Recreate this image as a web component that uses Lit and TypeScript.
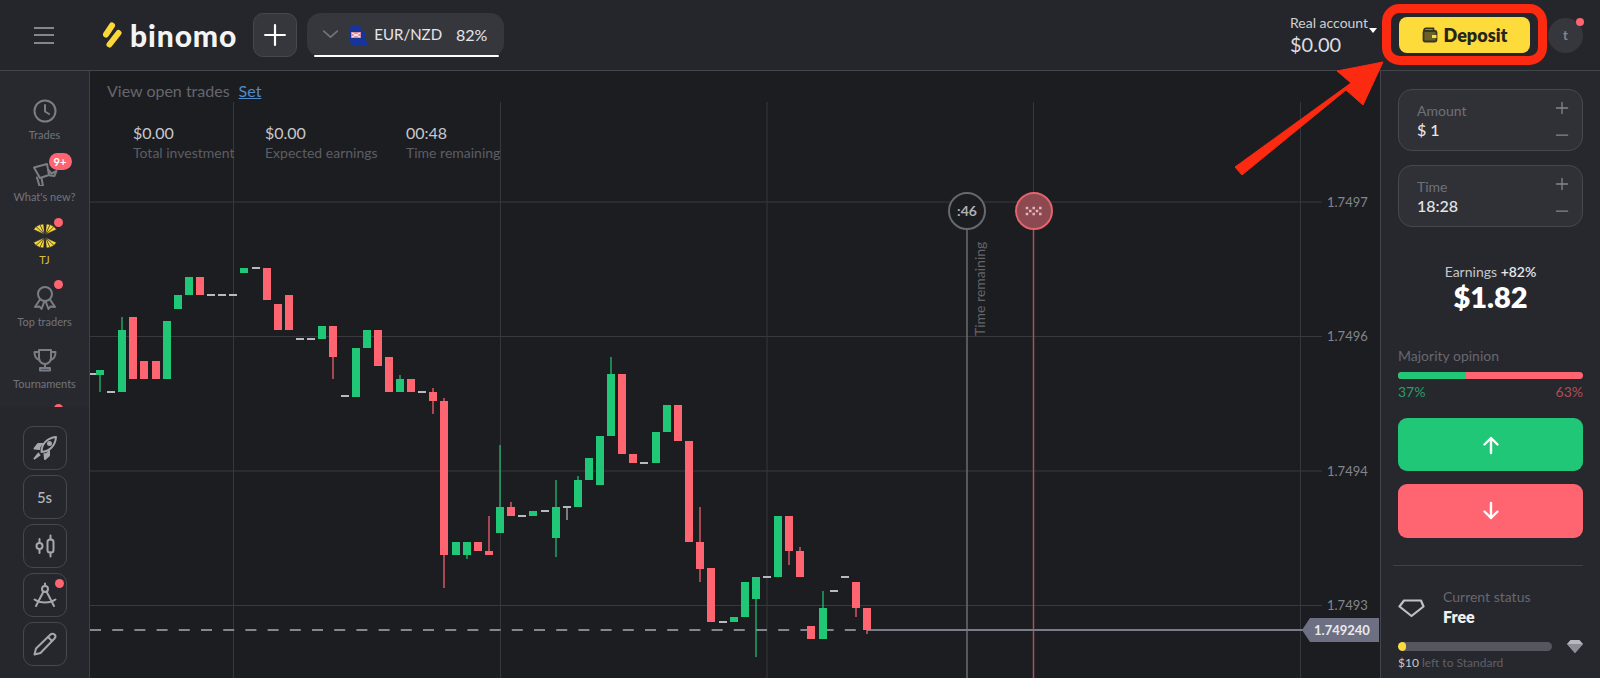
import { LitElement, html, css, svg } from "lit";
import { customElement } from "lit/decorators.js";

// [kind, left x, body top, body bottom, wick top, wick bottom]; g = green, r = red, d = doji dash
type C = [string, number, number, number, number?, number?];
const CANDLES: C[] = [
  ["d",90,374,374],["g",96,370,375,370,392],["d",107,392,392],["g",118,330,392,317,392],["r",129,317,379],["r",140,361,379],["r",152,361,379],["g",163,321,379],
  ["g",174,295,309],["g",185,277,295],["r",196,277,295],["d",207,295,295],["d",218,295,295],["d",229,295,295],["g",240,268,273],["d",252,268,268],
  ["r",263,268,300],["r",274,304,330],["r",285,295,330],["d",296,339,339],["d",307,339,339],["g",318,326,339],["r",329,326,357,326,379],["d",341,396,396],
  ["g",352,348,397],["g",363,330,348],["r",374,330,366],["r",385,357,392],["g",396,379,392,375,392],["r",407,379,392],["d",418,392,392],["r",429,392,401,388,414],
  ["r",440,401,555,398,588],["g",452,542,555],["g",463,542,555,542,559],["r",474,542,551],["r",485,551,555,516,555],["g",496,507,533,445,533],["r",507,507,516,502,516],
  ["d",518,516,516],["g",529,511,516],["d",541,511,511],["g",552,507,538,480,557],["d",563,507,507,507,520],["g",574,480,507,476,507],["g",585,458,480],["g",596,436,485],
  ["g",607,374,436,357,436],["r",618,374,454],["r",629,454,463],["d",640,463,463],["g",652,432,463],["g",663,405,432],["r",674,405,441],["r",685,441,542],
  ["r",696,542,569,507,582],["r",707,568,622],["d",719,622,622],["g",730,617,622],["g",741,582,617],["g",752,577,599,577,657],["d",763,577,577],["g",774,516,577],
  ["r",785,516,551,516,565],["r",796,551,577,547,577],["r",807,626,639],["g",819,608,639,591,639],["d",830,591,591],["d",841,577,577],["r",852,582,608,582,617],["r",863,608,630,608,634],
];
const COL: Record<string, string> = { g: "#1fc777", r: "#ff6571", d: "#b9bac0" };
const GRID_Y = [202, 336.5, 471, 605.5];
const GRID_X = [233.5, 500.5, 767, 1033.5, 1300.5];
const AXIS: [string, number][] = [["1.7497", 202], ["1.7496", 336.5], ["1.7494", 471], ["1.7493", 605.5]];
const DOTS: [number, number][] = [[1027,208],[1033.7,208],[1040.3,208],[1030.3,211],[1037,211],[1027,214],[1033.7,214],[1040.3,214]];

function candle(c: C) {
  const [k, x, t, b, wt, wb] = c;
  const col = COL[k];
  const wick = wt !== undefined
    ? svg`<rect x=${x + 3.4} y=${wt} width="1.2" height=${(wb as number) - wt} fill=${col}></rect>` : null;
  const h = k === "d" ? 2 : b - t;
  return svg`${wick}<rect x=${x} y=${k === "d" ? t - 1 : t} width="8" height=${h} fill=${col}></rect>`;
}

const ic = (body: unknown, s = 26) => html`<svg class="ic" width=${s} height=${s} viewBox="0 0 26 26" fill="none" stroke="#7c7d84" stroke-width="2" stroke-linejoin="round" stroke-linecap="round">${body}</svg>`;

const clock = ic(svg`<circle cx="13" cy="13" r="10.5"></circle><path d="M13 7v6.5l4 2.5"></path>`);
const mega = ic(svg`<g transform="translate(0 2)"><path d="M2 5.500 15 2l2 11-9 3Z"></path><path d="M5 15.500 7.500 24h3.500l-1.500-8"></path><path d="M16.500 8l3 3.500 5-2.500-2 5-4.500-.5"></path></g>`);
const tj = ic(svg`<g stroke="#28292f" stroke-width=".6" fill="#f6d63b"><path d="M12.500 11.500 1.500 6.500 4 3.500Z"></path><path d="M12.500 11.500 4 3.500 8 1.500Z"></path><path d="M12.500 11.500 8 1.500 11.500 1Z"></path><path d="M13.500 11.500 24.500 6.500 22 3.500Z"></path><path d="M13.500 11.500 22 3.500 18 1.500Z"></path><path d="M13.500 11.500 18 1.500 14.500 1Z"></path><path d="M12.500 14.500 1.500 19.500 4 22.500Z"></path><path d="M12.500 14.500 4 22.500 8 24.500Z"></path><path d="M12.500 14.500 8 24.500 11.500 25Z"></path><path d="M13.500 14.500 24.500 19.500 22 22.500Z"></path><path d="M13.500 14.500 22 22.500 18 24.500Z"></path><path d="M13.500 14.500 18 24.500 14.500 25Z"></path></g>`);
const rosette = ic(svg`<circle cx="13" cy="9" r="7"></circle><path d="M8 14.500 3 22l4.500-.5L9.500 24l3-8"></path><path d="M18 14.500 23 22l-4.500-.5-2 2.500-3-8"></path>`);
const trophy = ic(svg`<path d="M7 3h12v8a6 6 0 0 1-12 0Z"></path><path d="M7 5H2.500c0 5 1.500 7 5 8M19 5h4.500c0 5-1.500 7-5 8"></path><path d="M13 17v4M8 23.500h10v-2.500H8Z"></path>`);
const rocket = ic(svg`<g stroke="#a6a7ac"><path d="M9.500 17C9.500 9 15 3 24 2 23.500 10.500 17.500 16.500 9.500 17Z"></path><circle cx="17.500" cy="8.500" r="1.500" fill="#a6a7ac"></circle><path d="M10.500 9H6L2.500 13.500l5 .5M17 16v4.500L13 24l-.5-5" fill="#a6a7ac"></path><path d="M6.500 18.500 2.500 23.500l5-3.500" fill="#a6a7ac"></path></g>`);
const sticks = ic(svg`<g stroke="#a6a7ac"><circle cx="7.500" cy="13" r="3"></circle><path d="M7.500 6v4M7.500 16v4"></path><rect x="15.500" y="6.500" width="6" height="13" rx="2.500"></rect><path d="M18.500 2.500v4M18.500 19.500v4"></path></g>`);
const compass = ic(svg`<g stroke="#a6a7ac"><circle cx="13" cy="7" r="3"></circle><path d="M13 1.500V4M11.500 9.500 4 24M14.500 9.500 22 24M2.500 17.500c6 4 15 4 21 0"></path></g>`);
const pencil = ic(svg`<g stroke="#a6a7ac"><path d="M18.500 3.500a2.500 2.500 0 0 1 4 4L8.500 22l-6 1.500 1.500-6Z"></path><path d="M16 6l4 4"></path></g>`);

const NAV = [
  { l: "Trades", i: clock },
  { l: "What's new?", i: mega, badge: "9+" },
  { l: "TJ", i: tj, dot: true, y: true },
  { l: "Top traders", i: rosette, dot: true },
  { l: "Tournaments", i: trophy },
  { l: "", i: null, dot: true },
];

@customElement("app-root")
export class AppRoot extends LitElement {
  static styles = css`
    :host { display: block; width: 100%; height: 678px; overflow: hidden; position: relative;
      font-family: "Lato", "Noto Sans", sans-serif; background: #1c1d21; color: #fff; }
    .app { display: flex; flex-direction: column; height: 678px; }

    header { height: 70px; flex: none; display: flex; align-items: center; background: #25262c;
      border-bottom: 1px solid #44454b; padding-left: 34px; }
    .burger { width: 20px; display: flex; flex-direction: column; gap: 5.500px; margin-right: 49px; }
    .burger i { display: block; height: 2px; background: #85868c; }
    .logo { display: flex; align-items: center; gap: 8px; margin-right: 16px; }
    .logo b { font-size: 30px; font-weight: 900; letter-spacing: .9px; line-height: 30px; color: #f4f4f4; }
    .plus { width: 44px; height: 44px; box-sizing: border-box; border-radius: 10px; background: #36373d; border: 1px solid #47484e;
      display: flex; align-items: center; justify-content: center; margin-right: 10px; }
    .pair { width: 197px; height: 44px; box-sizing: border-box; border-radius: 14px; background: #36373d; position: relative;
      display: flex; align-items: center; padding: 0 0 2px 15px; font-size: 15px; color: #e6e6e8; }
    .pair::after { content: ""; position: absolute; left: 7px; right: 5px; bottom: 0; height: 2.500px; background: #fff; border-radius: 2px; }
    .pair .flag { margin: 0 6px 0 9px; }
    .pair .pct { margin-left: 14px; font-size: 16px; }
    .acct { margin-left: auto; margin-right: 4px; width: 87px; display: flex; flex-direction: column; position: relative; }
    .acct small { font-size: 14px; line-height: 18px; color: #cfd0d3; }
    .acct span { font-size: 20px; line-height: 25px; color: #dcdde0; }
    .tri { position: absolute; right: 0; top: 14px; width: 0; height: 0; border: 4px solid transparent; border-top: 5px solid #fff; }
    .deposit { width: 131px; height: 36px; border-radius: 8px; background: #fddb3a; color: #26261d; font-weight: 800; font-size: 18px;
      display: flex; align-items: center; justify-content: center; gap: 6px; margin: 0 18px; }
    .avatar { width: 35px; height: 35px; border-radius: 50%; background: #36373d; color: #85868c; font-size: 13px; font-weight: 700;
      display: flex; align-items: center; justify-content: center; position: relative; margin-right: 17px; }
    .avatar::after { content: ""; position: absolute; right: -1px; top: 0; width: 8px; height: 8px; border-radius: 50%; background: #ff6571; }

    main { flex: 1; display: flex; min-height: 0; }
    aside { width: 89px; flex: none; background: #28292f; border-right: 1px solid #3f4046; display: flex; flex-direction: column; }
    nav { height: 336px; flex: none; overflow: hidden; display: flex; flex-direction: column; align-items: center; padding-top: 27px; box-sizing: border-box; }
    .item { height: 62.300px; flex: none; width: 100%; display: flex; flex-direction: column; align-items: center; font-size: 11px; line-height: 14px; color: #73747b; }
    .item.y { color: #d8bd38; }
    .item .holder { position: relative; width: 26px; height: 26px; margin-bottom: 4px; }
    .dot { position: absolute; left: 22px; top: -5px; width: 9px; height: 9px; border-radius: 50%; background: #ff6571; }
    .badge { position: absolute; left: 17px; top: -7px; width: 23px; height: 17px; border-radius: 9px; background: #ff6571; color: #fff; font-size: 11px; font-weight: 700; line-height: 17px; text-align: center; }
    .tools { flex: 1; background: #26272d; display: flex; flex-direction: column; align-items: center; gap: 5px; padding-top: 19px; }
    .tool { width: 44px; height: 44px; box-sizing: border-box; border: 1px solid #47484e; border-radius: 10px; display: flex; align-items: center; justify-content: center;
      position: relative; color: #b5b6ba; font-size: 15px; font-weight: 500; }
    .tool .dot { left: 31px; top: 5px; }

    .chart { flex: 1; position: relative; overflow: hidden; background: #1c1d21; }
    .chart > svg { position: absolute; left: 0; top: 0; }
    .chart text { font-family: "Lato", "Noto Sans", sans-serif; }
    .overlay { position: absolute; left: 17px; top: 10px; }
    .open { font-size: 16px; line-height: 20px; color: #66676d; display: flex; gap: 9px; }
    .open a { color: #4f8ac9; text-decoration: underline; }
    .stats { display: flex; margin: 22px 0 0 26px; }
    .stat { display: flex; flex-direction: column; font-size: 14px; line-height: 20px; color: #5d5e64; }
    .stat b { font-weight: 400; font-size: 16px; color: #c7c8cc; }
    .stat:nth-child(1) { width: 132px; }
    .stat:nth-child(2) { width: 141px; }

    .panel { width: 220px; flex: none; background: #27282e; border-left: 1px solid #44454b; box-sizing: border-box; padding: 18px 17px 0 17px; display: flex; flex-direction: column; }
    .field { height: 62px; box-sizing: border-box; border: 1px solid #47484e; border-radius: 14px; background: #303137; padding: 11px 12px 0 18px; margin-bottom: 14px;
      display: flex; justify-content: space-between; }
    .field label { display: flex; flex-direction: column; font-size: 14px; line-height: 19px; color: #6f7077; }
    .field label b { font-weight: 500; font-size: 16px; line-height: 20px; color: #e6e6e8; }
    .pm { display: flex; flex-direction: column; justify-content: space-between; height: 40px; margin-top: -1px; }
    .earn { text-align: center; margin-top: 22px; font-size: 14px; line-height: 18px; color: #c5c6ca; }
    .earn em { font-style: normal; font-weight: 600; color: #e6e6e8; }
    .earn b { display: block; font-size: 29px; line-height: 31px; font-weight: 800; color: #fff; }
    .maj { margin-top: 35px; font-size: 14px; line-height: 18px; color: #66676e; }
    .bar { height: 7px; border-radius: 4px; margin-top: 7px; overflow: hidden; background: #ff6571; }
    .bar i { display: block; height: 100%; background: #1fc777; }
    .pcts { display: flex; justify-content: space-between; font-size: 14px; line-height: 18px; margin-top: 4px; }
    .pcts span:first-child { color: #2a9c68; } .pcts span:last-child { color: #b24d56; }
    .trade { height: 53px; border-radius: 9px; display: flex; align-items: center; justify-content: center; flex: none; }
    .up { background: #1fc777; margin-top: 17px; }
    .down { background: #ff6571; margin-top: 13px; height: 54px; }
    hr { border: 0; height: 1px; background: #3f4046; margin: 27px 0 0 -5px; width: 190px; }
    .status { display: flex; align-items: center; margin-top: 21px; }
    .status .gem { width: 45px; flex: none; }
    .status div { display: flex; flex-direction: column; font-size: 14px; line-height: 19px; color: #66676e; }
    .status b { font-size: 16px; font-weight: 800; color: #f0f0f0; line-height: 22px; }
    .prog { display: flex; align-items: center; justify-content: space-between; margin-top: 11px; }
    .track { width: 154px; height: 9px; border-radius: 5px; background: #55565e; overflow: hidden; }
    .track i { display: block; height: 100%; background: #fddb3a; border-radius: 5px; }
    .left { font-size: 12px; line-height: 16px; margin-top: 2px; color: #5f6067; }
    .left b { font-weight: 400; color: #c7c8cc; }

    .annot { position: absolute; left: 0; top: 0; pointer-events: none; }
  `;

  render() {
    const line = (d: string, s = 20, w = 2, c = "#fff") => html`<svg width=${s} height=${s} viewBox="0 0 20 20" fill="none" stroke=${c} stroke-width=${w} stroke-linecap="round" stroke-linejoin="round"><path d=${d}></path></svg>`;
    return html`
      <div class="app">
        <header>
          <div class="burger"><i></i><i></i><i></i></div>
          <div class="logo">
            <svg width="19" height="26" viewBox="0 0 19 26" fill="none" stroke="#fbd83a" stroke-width="6" stroke-linecap="round"><path d="M9 3.500 3 12.500M15.500 11 6.500 22.500"></path></svg>
            <b>binomo</b>
          </div>
          <div class="plus">${line("M10 1v18M1 10h18", 22, 2)}</div>
          <div class="pair">
            ${line("M2 6l8 7 8-7", 17, 2, "#73747b")}
            <svg class="flag" width="20" height="21" viewBox="0 0 20 21"><path d="M3 1h8l3 3v3l4 2v8l2 1v3H4l-2-3V4Z" fill="#17349b"></path><rect x="3" y="8" width="10" height="6" fill="#d98a9a"></rect><path d="M4 9l8 4M12 9l-8 4" stroke="#fff" stroke-width="1"></path></svg>
            <span>EUR/NZD</span><span class="pct">82%</span>
          </div>
          <div class="acct"><small>Real account</small><span>$0.00</span><i class="tri"></i></div>
          <div class="deposit">
            <svg width="16" height="16" viewBox="0 0 16 16" fill="none" stroke="#3a3720" stroke-width="1.800" stroke-linejoin="round"><path d="M2 4V3.500C2 2 3 1.500 4 1.500h7.500V4"></path><rect x="1.500" y="4" width="13" height="10.500" rx="1.500" fill="#6a6128"></rect><rect x="10" y="8" width="4.500" height="3" fill="#fddb3a" stroke="none"></rect></svg>
            Deposit
          </div>
          <div class="avatar">t</div>
        </header>
        <main>
          <aside>
            <nav>
              ${NAV.map(n => html`<div class="item ${n.y ? "y" : ""}">
                <div class="holder">${n.i}${n.dot ? html`<i class="dot"></i>` : null}${n.badge ? html`<span class="badge">${n.badge}</span>` : null}</div>
                ${n.l}
              </div>`)}
            </nav>
            <div class="tools">
              <div class="tool">${rocket}</div>
              <div class="tool">5s</div>
              <div class="tool">${sticks}</div>
              <div class="tool">${compass}<i class="dot"></i></div>
              <div class="tool">${pencil}</div>
            </div>
          </aside>
          <section class="chart">
            <svg width="1289" height="607" viewBox="90 71 1289 607">
              ${GRID_Y.map(y => svg`<line x1="90" x2="1322" y1=${y} y2=${y} stroke="#38393e"></line>`)}
              ${GRID_X.map(x => svg`<line x1=${x} x2=${x} y1="102" y2="678" stroke="#36373c"></line>`)}
              ${AXIS.map(([t, y]) => svg`<text x="1327" y=${y + 4.500} font-size="13" fill="#84858b">${t}</text>`)}
              <line x1="967" x2="967" y1="229" y2="678" stroke="#6b6c71" stroke-width="1.500"></line>
              <line x1="1033.500" x2="1033.500" y1="229" y2="678" stroke="#a5525b" stroke-width="1.500"></line>
              <line x1="90" x2="867" y1="630" y2="630" stroke="#85868e" stroke-width="2" stroke-dasharray="11 11.200"></line>
              <line x1="867" x2="1305" y1="630" y2="630" stroke="#797b8c" stroke-width="2"></line>
              ${CANDLES.map(candle)}
              <circle cx="967" cy="211" r="18" fill="#1c1d21" stroke="#68696e" stroke-width="2"></circle>
              <text x="967" y="216" text-anchor="middle" font-size="14" font-weight="700" fill="#b0b1b5">:46</text>
              <circle cx="1034" cy="211" r="18" fill="#8c4950" stroke="#e4636c" stroke-width="2"></circle>
              ${DOTS.map(([x, y]) => svg`<rect x=${x - 1.250} y=${y - 1.250} width="2.500" height="2.500" fill="#e3b6ba"></rect>`)}
              <text transform="translate(985 336) rotate(-90)" font-size="14" fill="#64656a">Time remaining</text>
              <path d="M1379 618H1310L1302 630L1310 642H1379Z" fill="#6d7083"></path>
              <text x="1314" y="635" font-size="13" font-weight="700" fill="#e9e9ec">1.749240</text>
            </svg>
            <div class="overlay">
              <div class="open"><span>View open trades</span><a>Set</a></div>
              <div class="stats">
                <div class="stat"><b>$0.00</b>Total investment</div>
                <div class="stat"><b>$0.00</b>Expected earnings</div>
                <div class="stat"><b>00:48</b>Time remaining</div>
              </div>
            </div>
          </section>
          <section class="panel">
            <div class="field"><label>Amount<b>$ 1</b></label><div class="pm">${line("M10 3v14M3 10h14", 16, 1.600, "#85868c")}${line("M3 14h14", 16, 1.600, "#85868c")}</div></div>
            <div class="field"><label>Time<b>18:28</b></label><div class="pm">${line("M10 3v14M3 10h14", 16, 1.600, "#85868c")}${line("M3 14h14", 16, 1.600, "#85868c")}</div></div>
            <div class="earn">Earnings <em>+82%</em><b>$1.82</b></div>
            <div class="maj">Majority opinion</div>
            <div class="bar"><i style="width:37%"></i></div>
            <div class="pcts"><span>37%</span><span>63%</span></div>
            <div class="trade up">${line("M10 18V3M3.500 9.500 10 3l6.500 6.500", 20, 2.400)}</div>
            <div class="trade down">${line("M10 2v15M3.500 10.500 10 17l6.500-6.500", 20, 2.400)}</div>
            <hr />
            <div class="status">
              <svg class="gem" height="20" viewBox="0 0 45 20" fill="none" stroke="#c0c1c5" stroke-width="2.200" stroke-linejoin="round"><path d="M7 2.500h17l2.500 6L14.500 18 2.500 8.500Z" transform="translate(-1 0)"></path></svg>
              <div>Current status<b>Free</b></div>
            </div>
            <div class="prog">
              <div class="track"><i style="width:5.500%"></i></div>
              <svg width="16" height="14" viewBox="0 0 16 14"><path d="M3.500 1h9L16 5l-8 9-8-9Z" fill="#b7b8c0"></path><path d="M0 5h16L8 14Z" fill="#8c8d96"></path></svg>
            </div>
            <div class="left"><b>$10</b> left to Standard</div>
          </section>
        </main>
      </div>
      <svg class="annot" width="1600" height="678" viewBox="0 0 1600 678" fill="none">
        <rect x="1386.500" y="8.500" width="156" height="52" rx="13" stroke="#fb2a10" stroke-width="9"></rect>
        <path d="M1235 167 1242 175 1346 90 1363 105 1383 62 1337 71 1351 83Z" fill="#fb2a10" stroke="#fb2a10" stroke-width="1"></path>
      </svg>
    `;
  }
}
